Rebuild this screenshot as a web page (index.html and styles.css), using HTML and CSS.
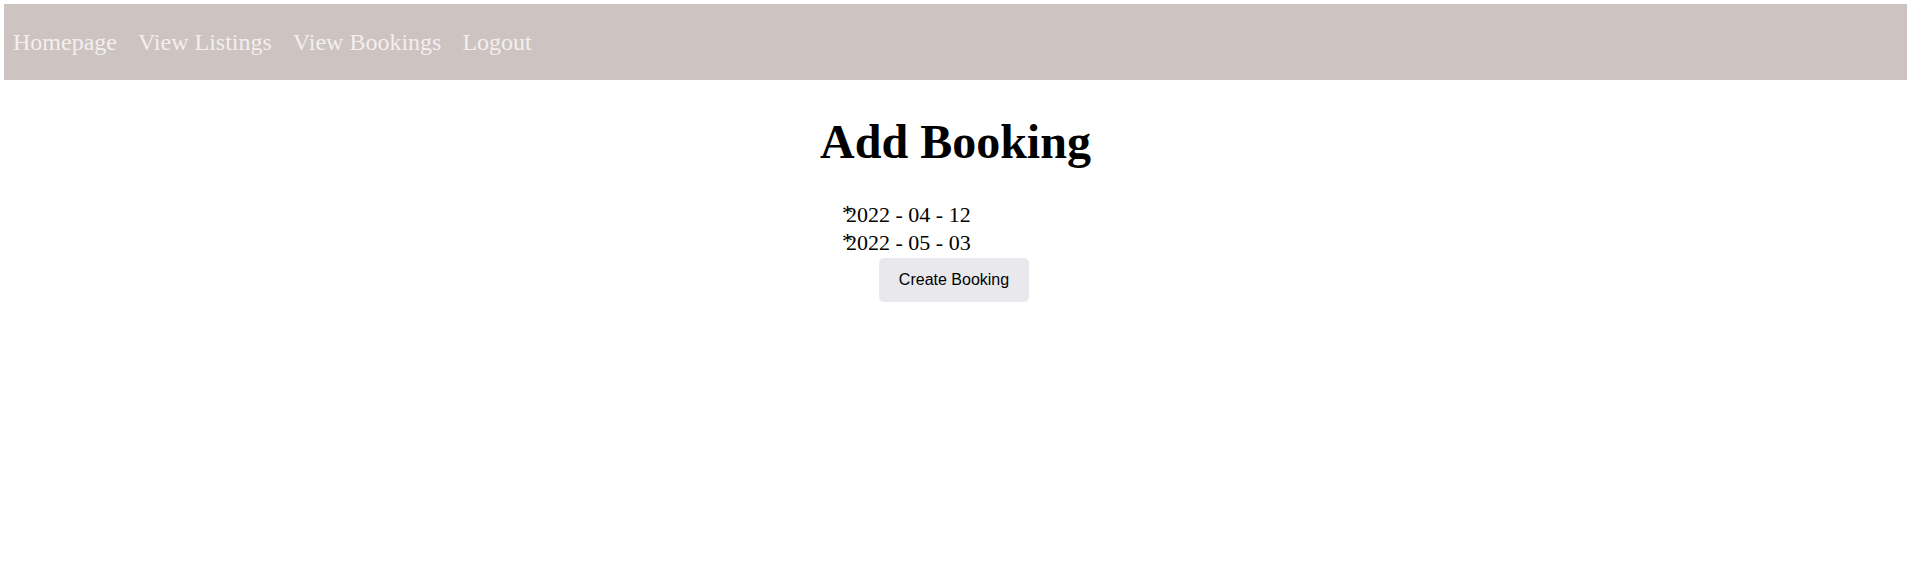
FILE: index.html
```html
<!DOCTYPE html>
<html lang="en">
<head>
<meta charset="utf-8">
<title>Add Booking</title>
<link rel="stylesheet" href="styles.css">
</head>
<body>
<nav class="navbar">
  <a class="nav-link" href="#">Homepage</a>
  <a class="nav-link" href="#">View Listings</a>
  <a class="nav-link" href="#">View Bookings</a>
  <a class="nav-link" href="#">Logout</a>
</nav>
<main class="content">
  <h1 class="title">Add Booking</h1>
  <form class="booking-form">
    <div class="date-list">
      <div class="date-row"><span class="star">*</span><span class="date">2022 - 04 - 12</span></div>
      <div class="date-row"><span class="star">*</span><span class="date">2022 - 05 - 03</span></div>
    </div>
    <button type="button" class="create-btn">Create Booking</button>
  </form>
</main>
</body>
</html>
```
FILE: styles.css
```css
html, body {
  margin: 0;
  padding: 0;
  background: #ffffff;
}
body {
  padding: 4px;
  font-family: "Liberation Serif", "Times New Roman", serif;
}
.navbar {
  display: flex;
  gap: 21px;
  padding: 25px 9px 24px;
  background: #cdc3c1;
}
.nav-link {
  font-size: 24px;
  line-height: 27px;
  color: #f4efef;
  text-decoration: none;
}
.content {
  display: flex;
  flex-direction: column;
  align-items: center;
}
.title {
  margin: 34px 0 32px;
  font-size: 48px;
  font-weight: bold;
  line-height: 55px;
  color: #000;
}
.booking-form {
  width: 227px;
  display: flex;
  flex-direction: column;
}
.date-list {
  display: flex;
  flex-direction: column;
}
.date-row {
  font-size: 22px;
  line-height: 28px;
  color: #000;
  white-space: nowrap;
}
.star {
  display: inline-block;
  width: 4px;
  position: relative;
  top: -2px;
}
.create-btn {
  align-self: center;
  margin: 1px 3px 0 0;
  padding: 0 20px;
  height: 44px;
  border: none;
  border-radius: 5px;
  background: #e9e9ed;
  font-family: "Liberation Sans", Arial, sans-serif;
  font-size: 16px;
  color: #000;
}
```
